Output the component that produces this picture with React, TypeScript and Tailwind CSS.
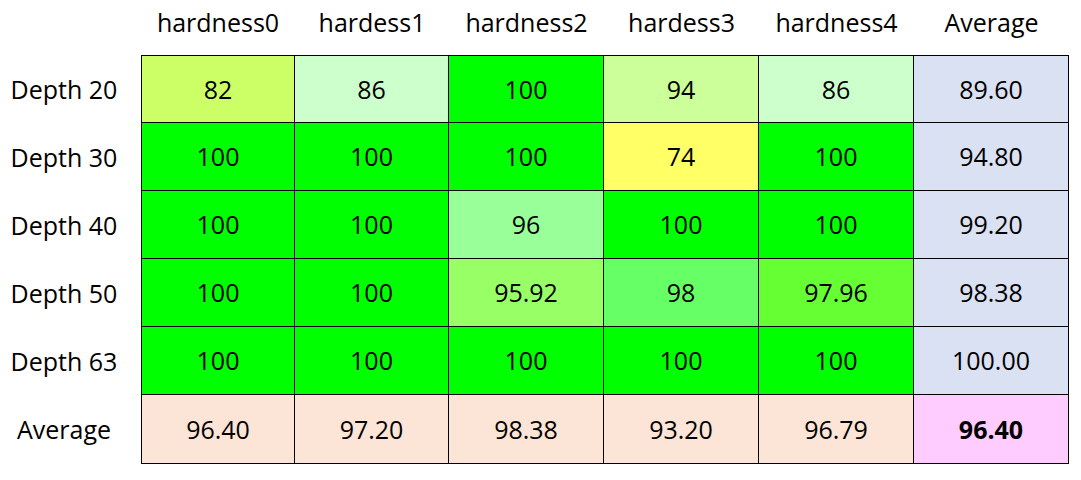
import React from "react";

type Cell = { v: string; bg: string; bold?: boolean };

const headers = ["hardness0", "hardess1", "hardness2", "hardess3", "hardness4", "Average"];
const widths = ["w-[154px]", "w-[154px]", "w-[155px]", "w-[155px]", "w-[155px]", "w-[155px]"];

const G = "bg-[#00ff00]";
const B = "bg-[#dae1f2]";
const P = "bg-[#fce4d6]";

const rows: { label: string; cells: Cell[]; h: string }[] = [
  {
    label: "Depth 20",
    h: "h-[68px]",
    cells: [
      { v: "82", bg: "bg-[#ccff66]" },
      { v: "86", bg: "bg-[#ccffcc]" },
      { v: "100", bg: G },
      { v: "94", bg: "bg-[#ccff99]" },
      { v: "86", bg: "bg-[#ccffcc]" },
      { v: "89.60", bg: B },
    ],
  },
  {
    label: "Depth 30",
    h: "h-[68px]",
    cells: [
      { v: "100", bg: G },
      { v: "100", bg: G },
      { v: "100", bg: G },
      { v: "74", bg: "bg-[#ffff66]" },
      { v: "100", bg: G },
      { v: "94.80", bg: B },
    ],
  },
  {
    label: "Depth 40",
    h: "h-[68px]",
    cells: [
      { v: "100", bg: G },
      { v: "100", bg: G },
      { v: "96", bg: "bg-[#99ff99]" },
      { v: "100", bg: G },
      { v: "100", bg: G },
      { v: "99.20", bg: B },
    ],
  },
  {
    label: "Depth 50",
    h: "h-[68px]",
    cells: [
      { v: "100", bg: G },
      { v: "100", bg: G },
      { v: "95.92", bg: "bg-[#99ff66]" },
      { v: "98", bg: "bg-[#66ff66]" },
      { v: "97.96", bg: "bg-[#66ff33]" },
      { v: "98.38", bg: B },
    ],
  },
  {
    label: "Depth 63",
    h: "h-[68px]",
    cells: [
      { v: "100", bg: G },
      { v: "100", bg: G },
      { v: "100", bg: G },
      { v: "100", bg: G },
      { v: "100", bg: G },
      { v: "100.00", bg: B },
    ],
  },
  {
    label: "Average",
    h: "h-[69px]",
    cells: [
      { v: "96.40", bg: P },
      { v: "97.20", bg: P },
      { v: "98.38", bg: P },
      { v: "93.20", bg: P },
      { v: "96.79", bg: P },
      { v: "96.40", bg: "bg-[#ffccff]", bold: true },
    ],
  },
];

export default function App() {
  return (
    <div
      className="w-[1081px] h-[480px] bg-white text-black text-[25px] leading-none"
      style={{ fontFamily: '"Open Sans", "Noto Sans", sans-serif' }}
    >
      <div className="flex h-[55px]">
        <div className="w-[141px]" />
        {headers.map((h, i) => (
          <div key={i} className={`${widths[i]} flex items-center justify-center pb-[10px]`}>
            {h}
          </div>
        ))}
      </div>
      {rows.map((r, ri) => (
        <div key={ri} className={`flex ${r.h}`}>
          <div className="w-[141px] flex items-center justify-center pr-[13px]">{r.label}</div>
          {r.cells.map((c, ci) => (
            <div
              key={ci}
              className={`${widths[ci]} ${c.bg} ${c.bold ? "font-bold" : ""} flex items-center justify-center border-black border-r ${ci === 0 ? "border-l" : ""} ${ri === 0 ? "border-t" : ""} border-b`}
            >
              {c.v}
            </div>
          ))}
        </div>
      ))}
    </div>
  );
}
